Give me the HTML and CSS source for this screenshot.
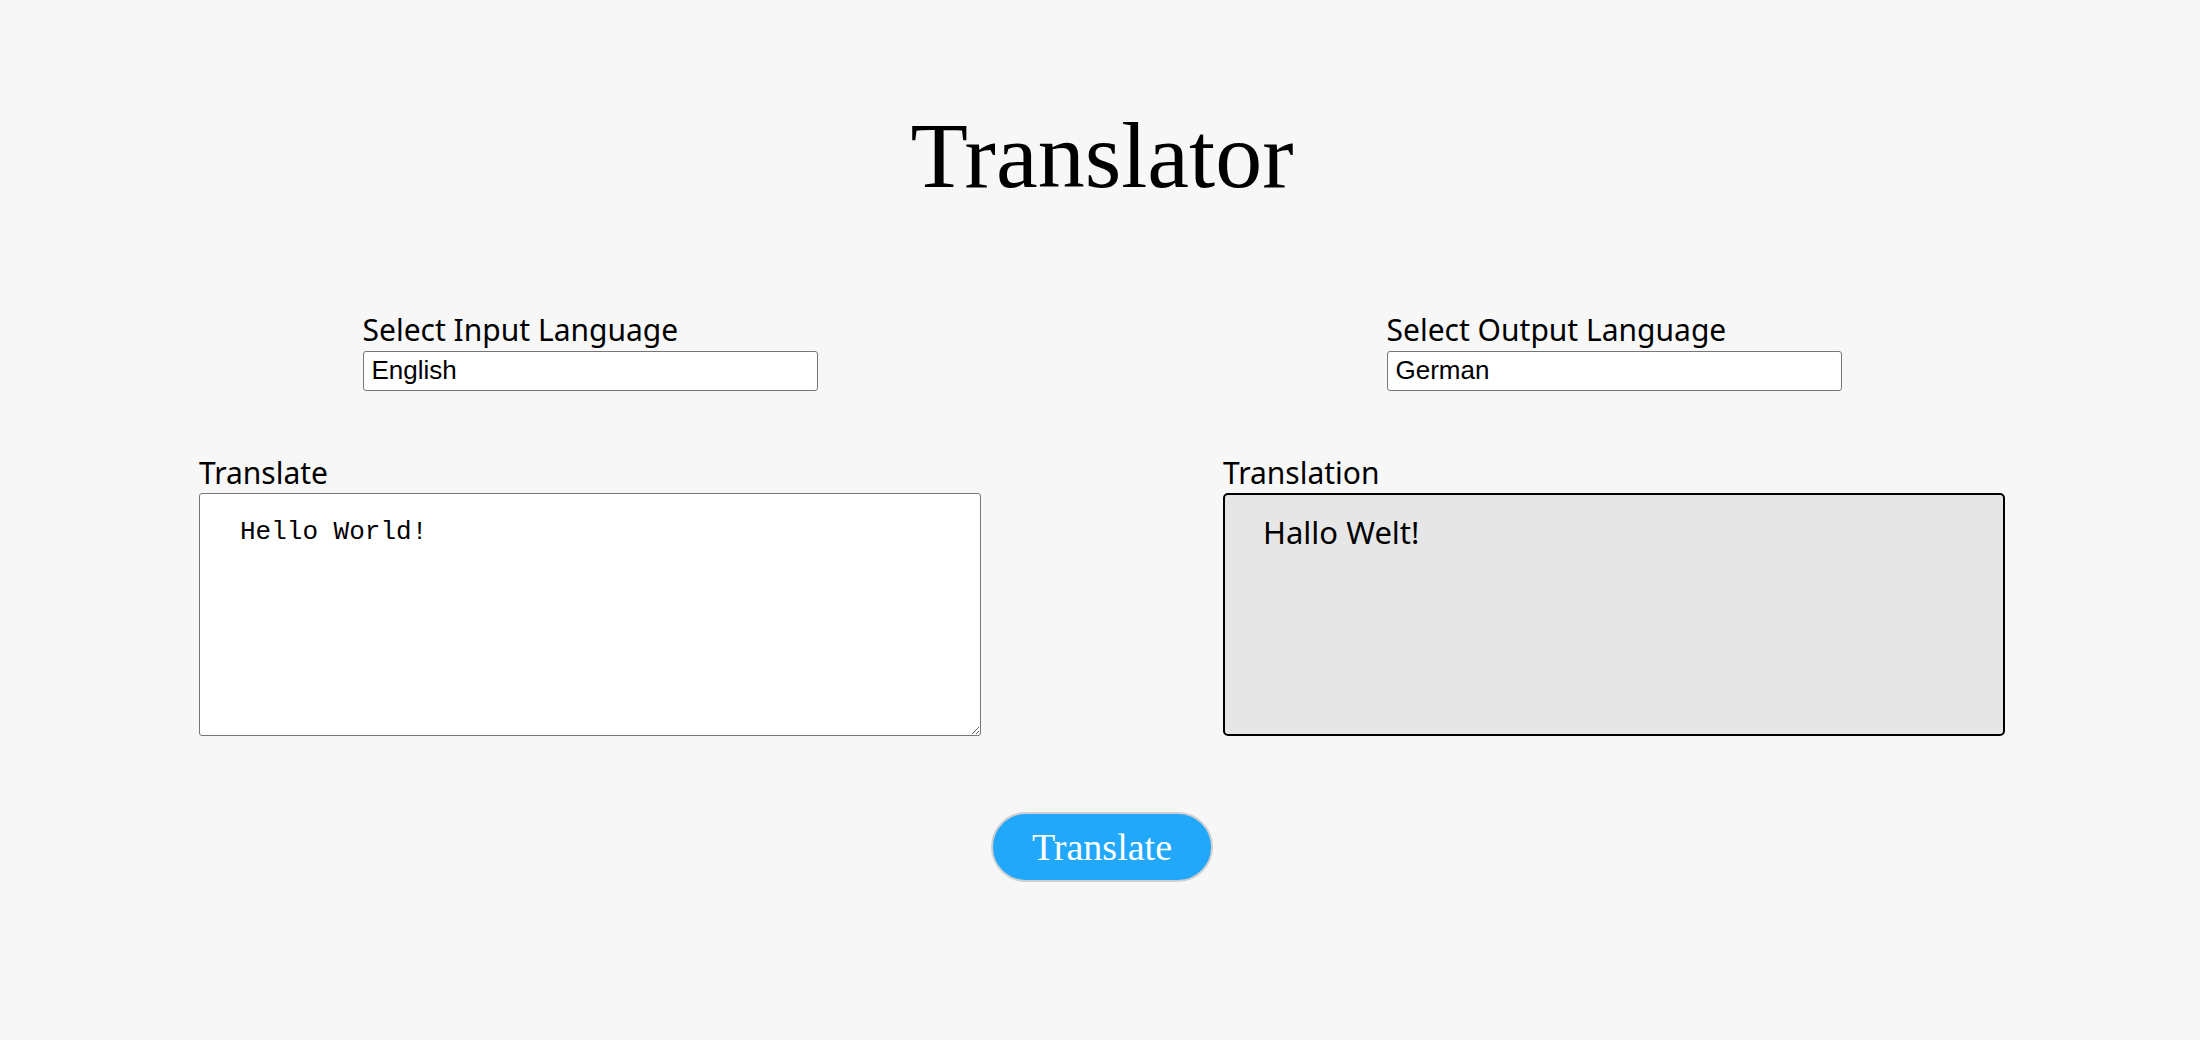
FILE: index.html
```html
<!DOCTYPE html>
<html lang="en">
<head>
<meta charset="utf-8">
<title>Translator</title>
<link rel="stylesheet" href="styles.css">
</head>
<body>
<div class="page">
  <h1 class="title">Translator</h1>
  <div class="row langs">
    <div class="col">
      <div class="field">
        <label class="label" for="inlang">Select Input Language</label>
        <input class="lang-input" id="inlang" type="text" value="English">
      </div>
    </div>
    <div class="col">
      <div class="field">
        <label class="label" for="outlang">Select Output Language</label>
        <input class="lang-input" id="outlang" type="text" value="German">
      </div>
    </div>
  </div>
  <div class="row panes">
    <div class="col">
      <label class="label" for="src">Translate</label>
      <textarea class="source" id="src">Hello World!</textarea>
    </div>
    <div class="col">
      <div class="label">Translation</div>
      <div class="output">Hallo Welt!</div>
    </div>
  </div>
  <div class="actions">
    <button class="btn" type="button">Translate</button>
  </div>
</div>
</body>
</html>
```
FILE: styles.css
```css
html, body {
  margin: 0;
  padding: 0;
  background: #f7f7f7;
}

.page {
  padding: 108px 0 0 4px;
  color: #000;
}

.title {
  margin: 0;
  text-align: center;
  font-family: "Liberation Serif", serif;
  font-weight: 400;
  font-size: 94px;
  line-height: 1;
}

.row {
  display: flex;
  justify-content: center;
  gap: 242px;
}

.col {
  width: 782px;
}

.langs {
  margin-top: 111px;
}

.field {
  width: 455px;
  margin: 0 auto;
}

.label {
  display: block;
  font-family: "Noto Sans", sans-serif;
  font-size: 30px;
  line-height: 1.15;
  margin-bottom: 3px;
}

.lang-input {
  display: block;
  box-sizing: border-box;
  width: 455px;
  height: 40px;
  margin: 0;
  padding: 0 8px;
  border: 1px solid #767676;
  border-radius: 3px;
  background: #fff;
  font-family: "Liberation Sans", Arial, sans-serif;
  font-size: 26px;
  color: #000;
}

.panes {
  margin-top: 65px;
}

.source {
  display: block;
  box-sizing: border-box;
  width: 782px;
  height: 243px;
  margin: 0;
  padding: 23px 40px;
  border: 1px solid #767676;
  border-radius: 3px;
  background: #fff;
  font-family: "Liberation Mono", "Courier New", monospace;
  font-size: 26px;
  color: #000;
}

.output {
  box-sizing: border-box;
  width: 782px;
  height: 243px;
  padding: 16px 38px;
  border: 2px solid #000;
  border-radius: 5px;
  background: #e6e6e6;
  font-family: "Noto Sans", sans-serif;
  font-size: 31px;
}

.actions {
  display: flex;
  justify-content: center;
  margin-top: 76px;
}

.btn {
  box-sizing: border-box;
  width: 222px;
  height: 70px;
  border: 2px solid #cfcfcf;
  border-radius: 35px;
  background: #22a8fb;
  color: #fff;
  font-family: "Liberation Serif", serif;
  font-size: 38px;
  padding: 0;
  cursor: pointer;
}
```
